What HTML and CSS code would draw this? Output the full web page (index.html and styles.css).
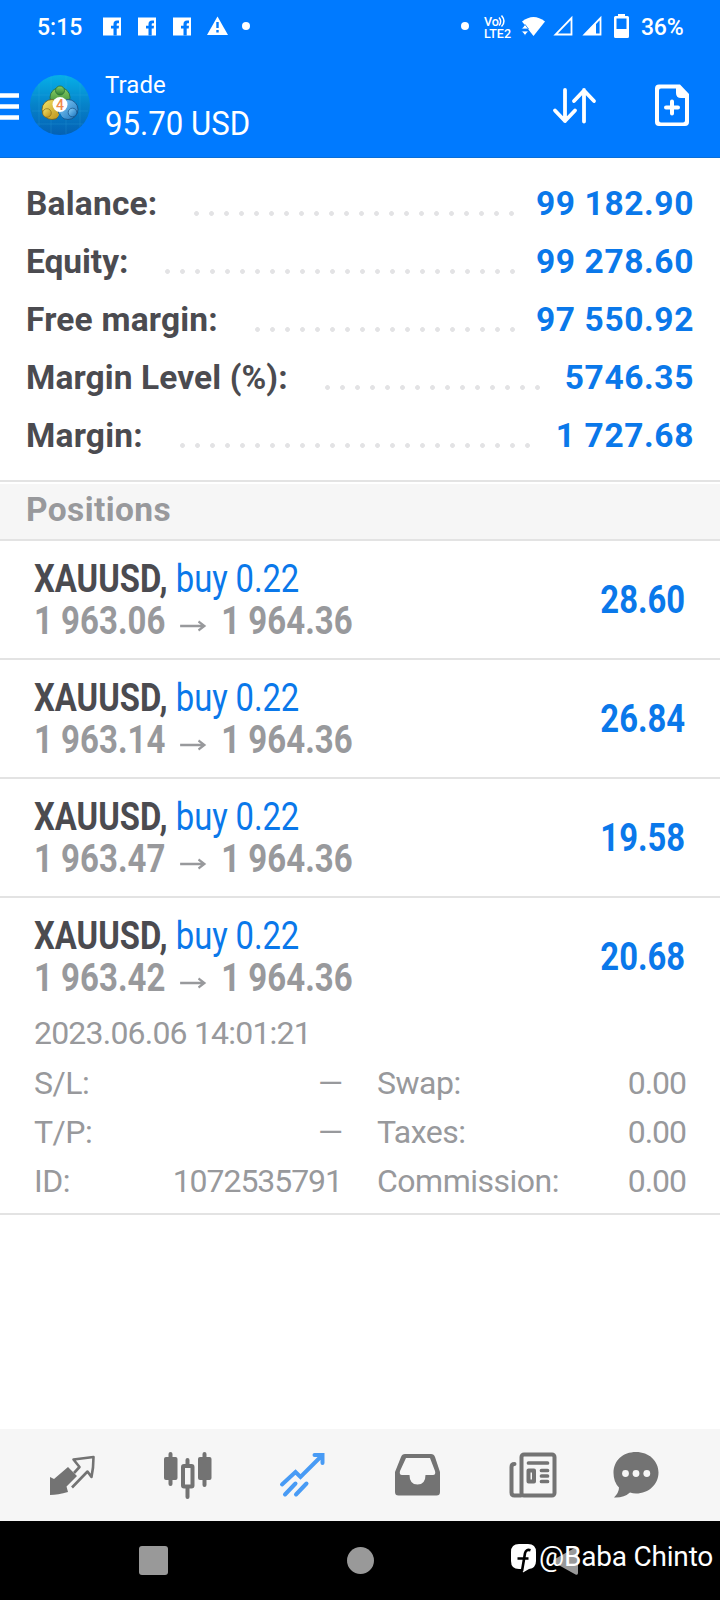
FILE: index.html
```html
<!DOCTYPE html>
<html lang="en">
<head>
<meta charset="utf-8">
<title>Trade</title>
<link rel="stylesheet" href="styles.css">
</head>
<body>
<div class="screen">
  <header class="top">
    <div class="status">
      <span class="clock">5:15</span>
      <svg class="status-left" width="160" height="24" viewBox="0 0 160 24">
        <defs>
          <g id="fb"><rect width="18" height="18" fill="#fff"/><path d="M10.500 18v-7H8V8.200h2.500V6.500Q10.500 3 14 3h2v2.800h-1.300q-1 0-1 1v1.400H16L15.700 11h-2v7z" fill="#007aff"/></g>
        </defs>
        <use href="#fb" x="3" y="5.500"/><use href="#fb" x="38" y="5.500"/><use href="#fb" x="73" y="5.500"/>
        <path d="M117.500 4.500 128 23h-21z" fill="#fff"/><path d="M117.500 10v6M117.500 18v2.500" stroke="#007aff" stroke-width="2.400"/>
        <circle cx="146" cy="14" r="4" fill="#fff"/>
      </svg>
      <svg class="status-right" width="172" height="26" viewBox="0 0 172 26">
        <circle cx="5" cy="14" r="4" fill="#fff"/>
        <text x="24" y="13.500" class="volte" textLength="15" lengthAdjust="spacingAndGlyphs">Vo</text>
        <path d="M39 5.500q3.500 4 0 8M41.500 3.500q5 6 0 11" fill="none" stroke="#fff" stroke-width="1.500"/>
        <text x="24" y="25.500" class="volte" textLength="27" lengthAdjust="spacingAndGlyphs">LTE2</text>
        <path d="M62 9.500Q73.500.500 85 9.500L73.500 24z" fill="#fff"/>
        <path d="M61.500 17l3.500-4.500 3.500 4.500zM61.500 19l3.500 4.500 3.500-4.500z" fill="#fff" stroke="#007aff" stroke-width=".8"/>
        <path d="M95.500 22.500h16V6z" fill="none" stroke="#fff" stroke-width="1.800"/>
        <path d="M124.500 22.500h16V6z" fill="none" stroke="#fff" stroke-width="1.800"/><path d="M124 23h12V10z" fill="#fff"/>
        <path d="M158 2h7v2h2.500q1.500 0 1.500 1.500v19q0 1.500-1.500 1.500h-12q-1.500 0-1.500-1.500v-19Q154 4 155.500 4h2.500z" fill="#fff"/><path d="M156.500 6.500h10V17h-10z" fill="#007aff"/>
      </svg>
      <span class="battery">36%</span>
    </div>
    <div class="toolbar">
      <svg class="menu" width="19" height="30" viewBox="0 0 19 30"><path d="M0 3.500h19M0 14.500h19M0 25.500h19" stroke="#fff" stroke-width="4.500"/></svg>
      <svg class="logo" width="60" height="60" viewBox="0 0 60 60">
        <defs>
          <linearGradient id="sky" x2="0" y2="1"><stop stop-color="#06b0e8"/><stop offset=".5" stop-color="#0682c9"/><stop offset="1" stop-color="#0461b4"/></linearGradient>
          <linearGradient id="green" x2="0" y2="1"><stop stop-color="#8ccf62"/><stop offset="1" stop-color="#2b8035"/></linearGradient>
          <linearGradient id="gold" x2="1" y2="1"><stop stop-color="#f4e56b"/><stop offset="1" stop-color="#ba8c14"/></linearGradient>
          <linearGradient id="azure" x2="1" y2="1"><stop stop-color="#8ed3fb"/><stop offset="1" stop-color="#1672bd"/></linearGradient>
        </defs>
        <circle cx="30" cy="30" r="30" fill="url(#sky)"/>
        <path d="M2 20h56M2 36h56M7 49h46M9 9v42M21 1v58M36 1v58M50 8v44" stroke="#48bdec" stroke-width=".6" opacity=".3"/>
        <g stroke-width=".8">
          <circle cx="30" cy="22.500" r="10" fill="url(#green)" stroke="#286c3a"/>
          <circle cx="22" cy="34.500" r="10" fill="url(#gold)" stroke="#6f5d1c"/>
          <circle cx="38" cy="34.500" r="10" fill="url(#azure)" stroke="#174f83"/>
        </g>
        <circle cx="30" cy="15.500" r="4.500" fill="url(#green)" stroke="#286c3a" stroke-width=".8"/>
        <circle cx="17" cy="38" r="4.300" fill="url(#gold)" stroke="#876b1d" stroke-width=".7"/>
        <circle cx="42.500" cy="37.500" r="4.300" fill="url(#azure)" stroke="#174f83" stroke-width=".7"/>
        <path d="M26.500 44.500 30 38l3.500 6.500z" fill="#0573c0"/>
        <circle cx="30" cy="29.500" r="7.500" fill="#fff"/>
        <text x="30" y="34.500" class="logo-num">4</text>
      </svg>
      <div class="title"><div class="title-name">Trade</div><div class="title-sum">95.70 USD</div></div>
      <svg class="sort" width="42" height="36" viewBox="0 0 42 36"><path d="M12 2v31M2 22.500l10 10.500 10-10.500M31 33.500V2M21 13 31 2.500 41 13" fill="none" stroke="#fff" stroke-width="3.800" stroke-linecap="round" stroke-linejoin="round"/></svg>
      <svg class="new" width="36" height="43" viewBox="0 0 36 43"><path d="M5 .500h21L35 10v28q0 4-4 4H5q-4 0-4-4V4.500Q1 .500 5 .500zM7 4.500q-2 0-2 2v30q0 2 2 2h22q2 0 2-2V14h-4q-5 0-5-5V4.500z" fill="#fff" fill-rule="evenodd"/><path d="M18 17.500v12M12 23.500h12" stroke="#fff" stroke-width="4" stroke-linecap="round"/></svg>
    </div>
  </header>

  <section class="account">
    <div class="line"><span class="label">Balance:</span><i class="dots" style="width:330px"></i><span class="sum">99 182.90</span></div>
    <div class="line"><span class="label tight">Equity:</span><i class="dots" style="width:360px"></i><span class="sum">99 278.60</span></div>
    <div class="line"><span class="label">Free margin:</span><i class="dots" style="width:270px"></i><span class="sum">97 550.92</span></div>
    <div class="line"><span class="label long">Margin Level (%):</span><i class="dots" style="width:225px"></i><span class="sum">5746.35</span></div>
    <div class="line"><span class="label">Margin:</span><i class="dots" style="width:360px"></i><span class="sum">1 727.68</span></div>
  </section>
  <h2 class="section-head">Positions</h2>

  <main class="positions">
    <article class="position"><div class="deal"><div class="deal-name"><b>XAUUSD,</b><span class="buy">buy 0.22</span></div><div class="deal-price"><b>1 963.06</b><svg class="arrow" viewBox="0 0 33 12"><path d="M0 6h29M22 1.500 29 6 22 10.500"/></svg><b>1 964.36</b></div></div><b class="profit">28.60</b></article>
    <article class="position"><div class="deal"><div class="deal-name"><b>XAUUSD,</b><span class="buy">buy 0.22</span></div><div class="deal-price"><b>1 963.14</b><svg class="arrow" viewBox="0 0 33 12"><path d="M0 6h29M22 1.500 29 6 22 10.500"/></svg><b>1 964.36</b></div></div><b class="profit">26.84</b></article>
    <article class="position"><div class="deal"><div class="deal-name"><b>XAUUSD,</b><span class="buy">buy 0.22</span></div><div class="deal-price"><b>1 963.47</b><svg class="arrow" viewBox="0 0 33 12"><path d="M0 6h29M22 1.500 29 6 22 10.500"/></svg><b>1 964.36</b></div></div><b class="profit">19.58</b></article>
    <article class="position open"><div class="deal"><div class="deal-name"><b>XAUUSD,</b><span class="buy">buy 0.22</span></div><div class="deal-price"><b>1 963.42</b><svg class="arrow" viewBox="0 0 33 12"><path d="M0 6h29M22 1.500 29 6 22 10.500"/></svg><b>1 964.36</b></div></div><b class="profit">20.68</b></article>
    <div class="details">
      <div class="date">2023.06.06 14:01:21</div>
      <div class="facts">
        <span>S/L:</span><span class="val dash">—</span><span>Swap:</span><span class="val">0.00</span>
        <span>T/P:</span><span class="val dash">—</span><span>Taxes:</span><span class="val">0.00</span>
        <span>ID:</span><span class="val">1072535791</span><span>Commission:</span><span class="val">0.00</span>
      </div>
    </div>
  </main>

  <nav class="tabs">
    <svg width="48" height="48" viewBox="0 0 48 48"><path d="M20 16 29 25 18.500 35.500 20 41Q10 44 2 44V26l4 2z" fill="#737373"/><path d="M26 22l5.500-6-6-7.500L45.500 6Q45.500 17 43.500 26l-4-5.500L24 36.500" fill="none" stroke="#737373" stroke-width="2.600" stroke-linejoin="round"/></svg>
    <svg width="48" height="48" viewBox="0 0 48 48"><path d="M6.500 3v30M23.500 9v12M23.500 36v10M40.500 3v31" stroke="#737373" stroke-width="4" stroke-linecap="round"/><rect y="6" width="13.500" height="23" rx="2" fill="#737373"/><rect x="34" y="6" width="13.500" height="23" rx="2" fill="#737373"/><rect x="19" y="15" width="9.500" height="20.500" rx="1" fill="#f6f6f6" stroke="#737373" stroke-width="4"/></svg>
    <svg width="48" height="48" viewBox="0 0 48 48"><path d="M4 33.500 17.500 21l5 5L44 4.500M36.500 4H44.500v8M7 43.500l10.500-11M18 43.500l10.500-11" fill="none" stroke="#489bf5" stroke-width="4" stroke-linecap="round" stroke-linejoin="miter"/></svg>
    <svg width="48" height="48" viewBox="0 0 48 48"><path d="M11 3h26q3 0 4 3l5 15v20q0 3.500-3.500 3.500h-38Q1 44.500 1 41V21L7 6q1-3 4-3zM12 7 6 20q-1 4 2 4h7.500q0 9.500 8 9.500t8-9.500H39q3 0 2-4L36 7z" fill="#737373" fill-rule="evenodd"/></svg>
    <svg width="48" height="48" viewBox="0 0 48 48"><rect x="12.500" y="3.500" width="33" height="41" rx="2.500" fill="none" stroke="#737373" stroke-width="4"/><path d="M12 44.500H5.500q-3 0-3-3V16q0-3 3-3" fill="none" stroke="#737373" stroke-width="4" stroke-linecap="round"/><path d="M19.500 12h19M32.500 19.500h6M32.500 25h6M32.500 30.500h6" stroke="#737373" stroke-width="3.700" stroke-linecap="round"/><rect x="19.500" y="19.500" width="5.500" height="11" fill="none" stroke="#737373" stroke-width="4" stroke-linejoin="round"/></svg>
    <svg width="48" height="48" viewBox="0 0 48 48"><path d="M24 1c13 0 22.500 9 22.500 20.500S37 42.500 24 42.500q-3 0-6-1Q12 47 2 46.500q5-5 5-10Q1.500 31 1.500 22C1.500 9.500 11 1 24 1z" fill="#737373"/><g fill="#f6f6f6"><circle cx="13.500" cy="22.500" r="3.400"/><circle cx="24" cy="22.500" r="3.400"/><circle cx="34.800" cy="22.500" r="3.400"/></g></svg>
  </nav>

  <footer class="system">
    <i class="recent"></i><i class="home"></i>
    <svg class="back" width="28" height="30" viewBox="0 0 28 30"><path d="M2 13.500 23.500 1.500Q26 .500 26 3v24q0 2.500-2.500 1.500L2 16.500Q0 15 2 13.500z" fill="#999"/></svg>
    <div class="credit"><svg width="25" height="29" viewBox="0 0 25 29"><path d="M8 0h9q8 0 8 8v9q0 7-7 8l-6 3.500L11.500 25H8q-8 0-8-8V8q0-8 8-8z" fill="#fff"/><path d="M19.500 6.300q-4.500-1.500-5.500 3L11 27M6.500 14.500h11" fill="none" stroke="#000" stroke-width="2.600"/></svg><span>@Baba Chinto</span></div>
  </footer>
</div>
</body>
</html>
```
FILE: styles.css
```css
* { box-sizing: border-box; }
body { margin: 0; background: #fff; font-family: Roboto, "Liberation Sans", sans-serif; }
svg { display: block; flex: none; overflow: visible; }
.screen { width: 720px; height: 1600px; display: flex; flex-direction: column; overflow: hidden; }

.top { height: 158px; background: #007aff; color: #fff; border-bottom: 1px solid #0a6fd8; }
.status { height: 54px; display: flex; align-items: flex-start; padding-left: 37px; font-size: 23px; font-weight: 500; line-height: 55px; }
.clock { width: 63px; }
.status-left { margin-top: 12px; }
.status-right { margin: 12px 0 0 200px; }
.battery { margin-left: 9px; letter-spacing: -.2px; }
.volte { font-size: 12.5px; font-weight: 500; fill: #fff; }

.toolbar { height: 103px; display: flex; align-items: flex-start; }
.menu { margin-top: 38px; }
.logo { margin: 21px 0 0 11px; }
.logo-num { font-size: 14px; font-weight: 500; fill: #f08a4b; text-anchor: middle; }
.title { width: 180px; margin: 16px 0 0 15px; }
.title-name { font-size: 24px; line-height: 30px; letter-spacing: .1px; }
.title-sum { font-size: 33.500px; line-height: 38px; margin-top: 5px; white-space: nowrap; transform: scaleX(.93); transform-origin: 0 0; }
.sort { margin: 34px 0 0 268px; }
.new { margin: 30px 0 0 59px; }

.account { height: 324px; padding: 17px 26px 0 26px; border-bottom: 2px solid #e3e3e3; }
.line { height: 58px; display: flex; align-items: center; font-size: 33.500px; font-weight: 700; line-height: 58px; white-space: nowrap; }
.label { color: #4b4b50; margin-right: 32px; letter-spacing: .2px; }
.label.tight { letter-spacing: -.05px; }
.label.long { letter-spacing: .1px; }
.dots { flex: none; height: 5px; margin-top: 18px; background: radial-gradient(circle at 7.500px 2.500px, #e3e3e5 2px, transparent 2.800px) 0 0 / 15px 5px repeat-x; }
.sum { color: #0a78ea; margin-left: auto; letter-spacing: .6px; }
.section-head { margin: 2px 0 0; height: 57px; padding-left: 26px; background: #f6f6f6; border-bottom: 2px solid #e3e3e3; color: #98999c; font-size: 33.500px; line-height: 52px; letter-spacing: .4px; }

.position { height: 119px; display: flex; align-items: flex-start; justify-content: space-between; padding: 17px 35px 0 34px; border-bottom: 2px solid #e3e3e3; font-size: 39.500px; line-height: 42px; white-space: nowrap; }
.position.open { border-bottom: 0; height: 111px; }
.deal-name, .deal-price { display: flex; height: 42px; transform: scaleX(.83); transform-origin: 0 0; }
.deal-name { color: #4b4b50; }
.buy { color: #0a78ea; margin-left: 10px; letter-spacing: -.1px; }
.deal-price { color: #98999c; transform: scaleX(.835); }
.arrow { width: 33px; height: 12px; margin: 20px 16px 0 18px; fill: none; stroke: #98999c; stroke-width: 2.500; }
.profit { color: #0a78ea; margin-top: 21px; transform: scaleX(.83); transform-origin: 100% 0; }

.details { height: 206px; padding: 0 34px; border-bottom: 2px solid #e3e3e3; color: #98999c; font-size: 32px; letter-spacing: -.5px; line-height: 49px; }
.date { height: 50px; letter-spacing: -.8px; }
.facts { display: grid; grid-template-columns: 100px 208px 195px 149px; grid-auto-rows: 49px; }
.facts span:nth-child(4n+3) { padding-left: 35px; }
.facts .val { text-align: right; letter-spacing: -1.050px; }

.tabs { margin-top: auto; height: 92px; background: #f6f6f6; display: grid; grid-template-columns: 116px 114px 116px 115px 103px 48px; padding: 22px 0 0 48px; }

.system { position: relative; height: 79px; background: #000; display: flex; align-items: flex-start; }
.recent { width: 29px; height: 29px; margin: 25px 0 0 139px; border-radius: 3px; background: #999; }
.home { width: 27px; height: 27px; margin: 26px 0 0 179px; border-radius: 50%; background: #999; }
.back { margin: 25px 0 0 178px; }
.credit { position: absolute; left: 511px; top: 23px; display: flex; gap: 3px; color: #fff; font-size: 28px; line-height: 26px; letter-spacing: -.2px; white-space: nowrap; }
```
